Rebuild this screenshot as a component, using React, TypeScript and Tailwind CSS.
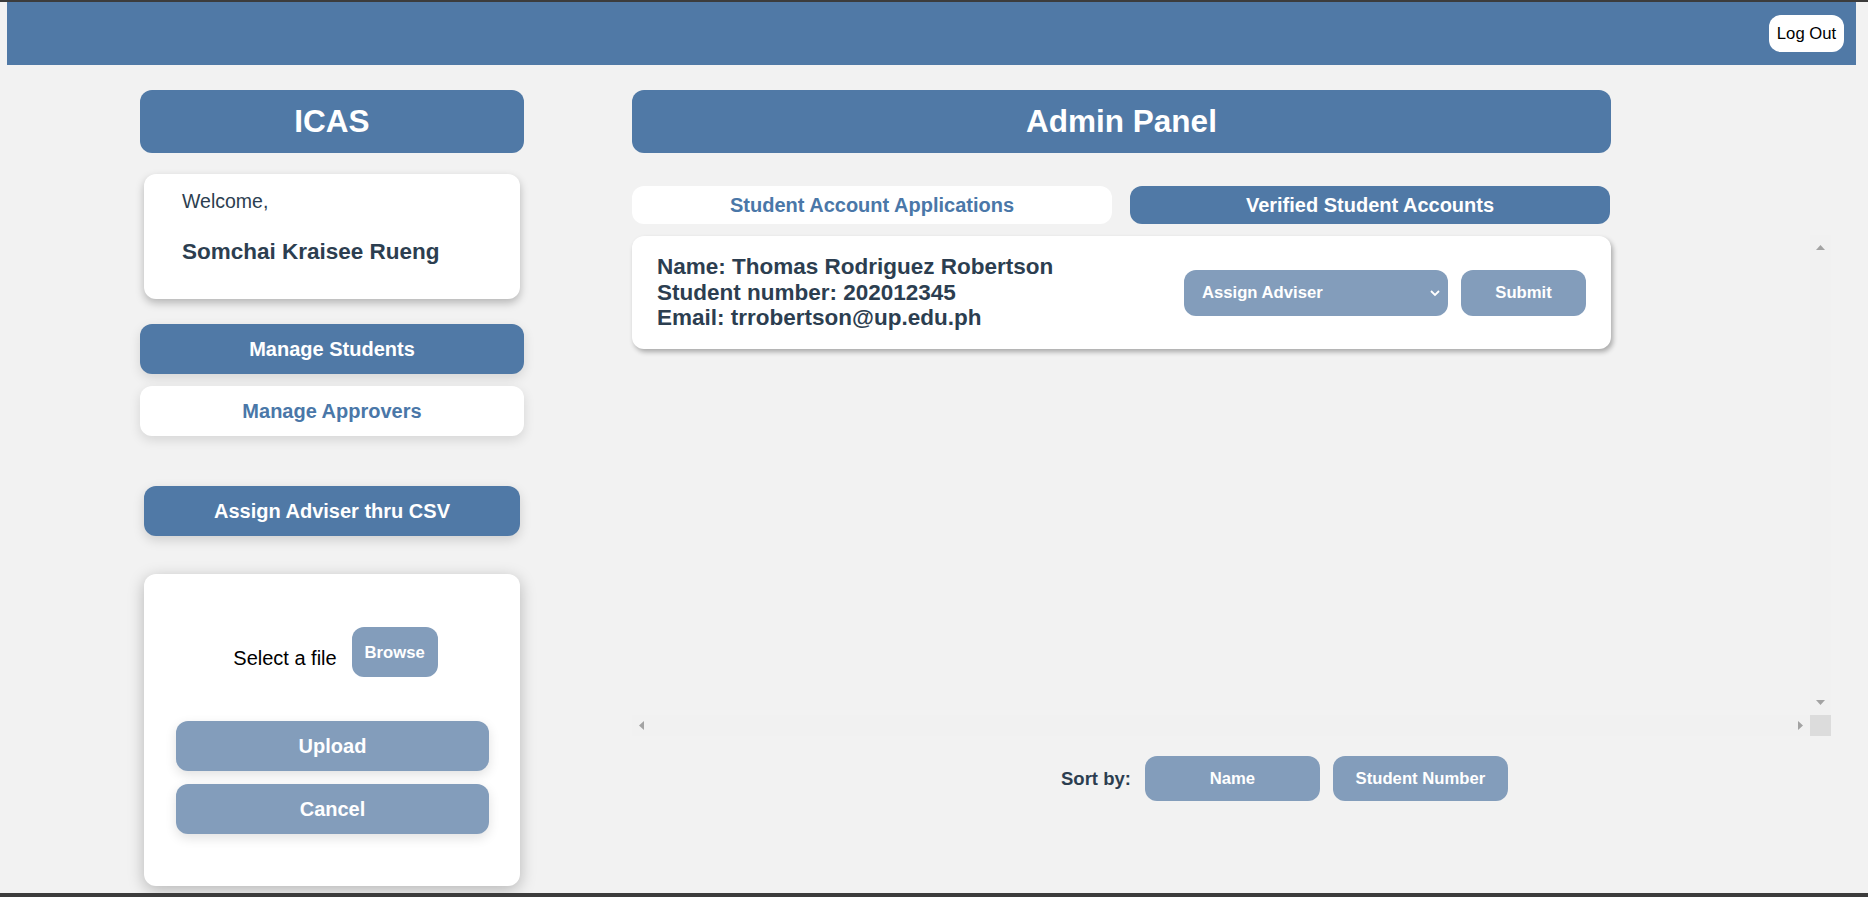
const blue = 'bg-[#5079a6]';

function ScrollArrow({ dir }: { dir: 'up' | 'down' | 'left' | 'right' }) {
  const points = {
    up: '0,5 9,5 4.5,0',
    down: '0,0 9,0 4.5,5',
    left: '5,0 5,9 0,4.5',
    right: '0,0 0,9 5,4.5',
  }[dir];
  const vertical = dir === 'up' || dir === 'down';
  return (
    <svg width={vertical ? 9 : 5} height={vertical ? 5 : 9} viewBox={vertical ? '0 0 9 5' : '0 0 5 9'}>
      <polygon points={points} fill="#a3a3a3" />
    </svg>
  );
}

function Sidebar() {
  return (
    <aside className="w-[384px] flex flex-col">
      <div className={`h-[63px] rounded-[12px] ${blue} flex items-center justify-center text-[31.5px] font-bold text-white`}>
        ICAS
      </div>

      <div className="mt-[21px] mx-[4px] h-[125px] bg-white rounded-[12px] shadow-[0_4px_8px_rgba(0,0,0,0.25)] pl-[38px] pt-[13px] text-[#2c3e50]">
        <p className="text-[19.5px]">Welcome,</p>
        <p className="mt-[19px] text-[22.5px] font-bold">Somchai Kraisee Rueng</p>
      </div>

      <button className={`mt-[25px] h-[50px] rounded-[12px] ${blue} text-white text-[20px] font-bold shadow-[0_4px_12px_rgba(0,0,0,0.12)]`}>
        Manage Students
      </button>
      <button className="mt-[12px] h-[50px] rounded-[12px] bg-white text-[#4a77a8] text-[20px] font-bold shadow-[0_4px_12px_rgba(0,0,0,0.12)]">
        Manage Approvers
      </button>

      <button className={`mt-[50px] mx-[4px] h-[50px] rounded-[12px] ${blue} text-white text-[20px] font-bold shadow-[0_4px_12px_rgba(0,0,0,0.15)]`}>
        Assign Adviser thru CSV
      </button>

      <div className="mt-[38px] mx-[4px] h-[312px] bg-white rounded-[12px] shadow-[0_4px_16px_rgba(0,0,0,0.25)] pt-[53px] pl-[32px] pr-[31px]">
        <div className="flex items-center justify-center gap-[15px] pl-[6px]">
          <span className="mt-[11px] text-[20px] text-black">Select a file</span>
          <button className="w-[86px] h-[50px] rounded-[12px] bg-[#839dbb] text-white text-[16.67px] font-bold">
            Browse
          </button>
        </div>
        <button className="mt-[44px] w-full h-[50px] rounded-[12px] bg-[#839dbb] text-white text-[20px] font-bold shadow-[0_4px_12px_rgba(0,0,0,0.12)]">
          Upload
        </button>
        <button className="mt-[13px] w-full h-[50px] rounded-[12px] bg-[#839dbb] text-white text-[20px] font-bold shadow-[0_4px_12px_rgba(0,0,0,0.12)]">
          Cancel
        </button>
      </div>
    </aside>
  );
}

function StudentCard() {
  return (
    <div className="w-[979px] h-[113px] bg-white rounded-[12px] shadow-[2px_3px_5px_rgba(0,0,0,0.3)] flex items-center justify-between px-[25px]">
      <div className="text-[22.5px] font-bold leading-[1.15] text-[#2c3e50]">
        <p>Name: Thomas Rodriguez Robertson</p>
        <p>Student number: 202012345</p>
        <p>Email: trrobertson@up.edu.ph</p>
      </div>
      <div className="flex items-center gap-[13px]">
        <button className="w-[264px] h-[46px] rounded-[12px] bg-[#839dbb] flex items-center justify-between pl-[18px] pr-[7px] text-white text-[16.67px] font-bold">
          Assign Adviser
          <svg width="12" height="8" viewBox="0 0 12 8">
            <path d="M2 2 L6 6 L10 2" fill="none" stroke="white" strokeWidth="1.8" />
          </svg>
        </button>
        <button className="w-[125px] h-[46px] rounded-[12px] bg-[#839dbb] text-white text-[16.67px] font-bold">
          Submit
        </button>
      </div>
    </div>
  );
}

function MainPanel() {
  return (
    <main className="ml-[108px] w-[1199px] flex flex-col">
      <div className={`w-[979px] h-[63px] rounded-[12px] ${blue} flex items-center justify-center text-[31.5px] font-bold text-white`}>
        Admin Panel
      </div>

      <div className="mt-[33px] flex gap-[18px]">
        <button className="w-[480px] h-[38px] rounded-[12px] bg-white text-[#4a77a8] text-[20px] font-bold">
          Student Account Applications
        </button>
        <button className={`w-[480px] h-[38px] rounded-[12px] ${blue} text-white text-[20px] font-bold`}>
          Verified Student Accounts
        </button>
      </div>

      <div className="mt-[11px] h-[501px] flex flex-col">
        <div className="flex-1 flex">
          <div className="flex-1 pt-[1px]">
            <StudentCard />
          </div>
          <div className="w-[21px] bg-[#f1f1f1] flex flex-col items-center justify-between py-[10px]">
            <ScrollArrow dir="up" />
            <ScrollArrow dir="down" />
          </div>
        </div>
        <div className="h-[21px] flex">
          <div className="flex-1 bg-[#f1f1f1] flex items-center justify-between px-[7px]">
            <ScrollArrow dir="left" />
            <ScrollArrow dir="right" />
          </div>
          <div className="w-[21px] bg-[#dcdcdc]" />
        </div>
      </div>

      <div className="mt-[20px] pl-[429px] flex items-center">
        <span className="text-[18.5px] font-bold text-[#2c3e50]">Sort by:</span>
        <button className="ml-[14px] w-[175px] h-[45px] rounded-[12px] bg-[#839dbb] text-white text-[16.67px] font-bold">
          Name
        </button>
        <button className="ml-[13px] w-[175px] h-[45px] rounded-[12px] bg-[#839dbb] text-white text-[16.67px] font-bold">
          Student Number
        </button>
      </div>
    </main>
  );
}

export default function App() {
  return (
    <div className="h-[897px] bg-[#f2f2f2] border-t-2 border-[#3c3c3c] flex flex-col overflow-hidden font-['Liberation_Sans',Arial,sans-serif]">
      <header className={`ml-[7px] w-[1849px] h-[63px] shrink-0 ${blue} flex items-center justify-end pr-[12px]`}>
        <button className="w-[75px] h-[37px] rounded-[12px] bg-white text-[16.67px] text-black">Log Out</button>
      </header>
      <div className="flex-1 flex pl-[140px] pt-[25px]">
        <Sidebar />
        <MainPanel />
      </div>
      <div className="h-[4px] shrink-0 bg-[#3c3c3c]" />
    </div>
  );
}
